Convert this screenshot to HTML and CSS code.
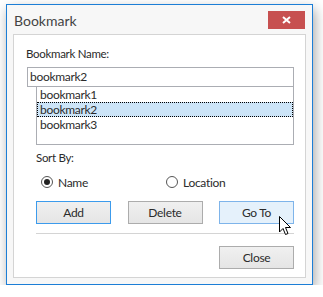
FILE: index.html
```html
<!DOCTYPE html>
<html lang="en">
<head>
    <meta charset="UTF-8">
    <title>Bookmark</title>
    <link rel="stylesheet" href="styles.css">
</head>
<body>
<div class="window">
    <div class="titlebar">
        <span class="title">Bookmark</span>
        <button class="close-x" aria-label="Close">
            <svg width="9" height="8" viewBox="0 0 9 8">
                <path d="M1 1 L8 7 M8 1 L1 7" stroke="#fff" stroke-width="2" fill="none"/>
            </svg>
        </button>
    </div>

    <div class="panel">
        <div class="field-label">Bookmark Name:</div>
        <div class="textbox">bookmark2</div>
        <ul class="listbox">
            <li>bookmark1</li>
            <li class="selected">bookmark2</li>
            <li>bookmark3</li>
        </ul>

        <div class="indented">
            <div class="sort-label">Sort By:</div>
            <div class="radios">
                <label class="radio checked"><span class="dot"></span>Name</label>
                <label class="radio"><span class="dot"></span>Location</label>
            </div>
            <div class="buttons">
                <button class="btn default">Add</button>
                <button class="btn">Delete</button>
                <button class="btn hover">Go To
                    <svg class="cursor" width="13" height="20" viewBox="0 0 13 20">
                        <path d="M0.5 0.5 L0.5 16 L4 12.5 L6.5 18.5 L9 17.5 L6.5 11.5 L11.5 11.5 Z" fill="#fff" stroke="#000" stroke-width="1"/>
                    </svg>
                </button>
            </div>
            <div class="separator"></div>
            <div class="footer">
                <button class="btn">Close</button>
            </div>
        </div>
    </div>
</div>
</body>
</html>
```

FILE: styles.css
```css
body {
    margin: 0;
    padding: 4px 0 0 6px;
    background-color: #fff;
    font-family: Lato, 'Open Sans', sans-serif;
    font-size: 11.5px;
    letter-spacing: -0.3px;
    color: #2b2b2b;
}

.window {
    width: 305px;
    height: 279px;
    border: 1px solid #1c7ed6;
    background-color: #f7f7f7;
    box-shadow: 2px 5px 12px rgba(0, 0, 0, 0.35);
    display: flex;
    flex-direction: column;
}

.titlebar {
    height: 29px;
    display: flex;
    justify-content: space-between;
    align-items: flex-start;
    padding: 0 7px 0 7px;
}

.title {
    font-size: 14px;
    letter-spacing: 0;
    color: #444;
    margin-top: 7px;
}

.close-x {
    width: 37px;
    height: 18px;
    margin-top: 6px;
    border: none;
    padding: 0;
    background-color: #c75050;
    display: flex;
    align-items: center;
    justify-content: center;
}

.panel {
    flex: 1;
    margin: 0 6px 6px 6px;
    border: 1px solid #d4d4d4;
    background-color: #fff;
    padding: 11px 11px 0 13px;
}

.field-label {
    line-height: 16px;
    margin-left: -1px;
}

.textbox {
    margin-top: 5px;
    height: 18px;
    line-height: 18px;
    border: 1px solid #abadb3;
    padding-left: 2px;
    font-size: 12px;
}

.listbox {
    list-style: none;
    margin: -1px 0 0 9px;
    padding: 0;
    height: 57px;
    border: 1px solid #abadb3;
    font-size: 12px;
}

.listbox li {
    height: 15px;
    line-height: 13px;
    padding-left: 2px;
    border: 1px solid transparent;
    box-sizing: border-box;
}

.listbox li.selected {
    background-color: #cce4f7;
    border: 1px dotted #000;
}

.indented {
    margin-left: 9px;
}

.sort-label {
    margin-top: 5px;
    line-height: 16px;
}

.radios {
    display: flex;
    margin-top: 8px;
    padding-left: 5px;
    height: 16px;
    align-items: center;
}

.radio {
    display: flex;
    align-items: center;
    gap: 5px;
    width: 125px;
    font-size: 12px;
}

.dot {
    width: 12px;
    height: 12px;
    border: 1px solid #555;
    border-radius: 50%;
    box-sizing: border-box;
    background-color: #fff;
    display: flex;
    align-items: center;
    justify-content: center;
}

.radio.checked .dot::after {
    content: '';
    width: 6px;
    height: 6px;
    border-radius: 50%;
    background-color: #222;
}

.buttons {
    display: flex;
    justify-content: space-between;
    margin-top: 11px;
}

.btn {
    position: relative;
    width: 75px;
    height: 23px;
    border: 1px solid #acacac;
    background: linear-gradient(#f0f0f0, #e5e5e5);
    font-family: inherit;
    font-size: 12px;
    letter-spacing: -0.3px;
    color: #2b2b2b;
    padding: 0;
}

.btn.default {
    border-color: #3c9bec;
}

.btn.hover {
    background: #e5f1fb;
    border-color: #7eb4ea;
}

.cursor {
    position: absolute;
    left: 59px;
    top: 14px;
}

.separator {
    height: 1px;
    background-color: #d4d4d4;
    margin-top: 9px;
}

.footer {
    display: flex;
    justify-content: flex-end;
    margin-top: 12px;
}
```
